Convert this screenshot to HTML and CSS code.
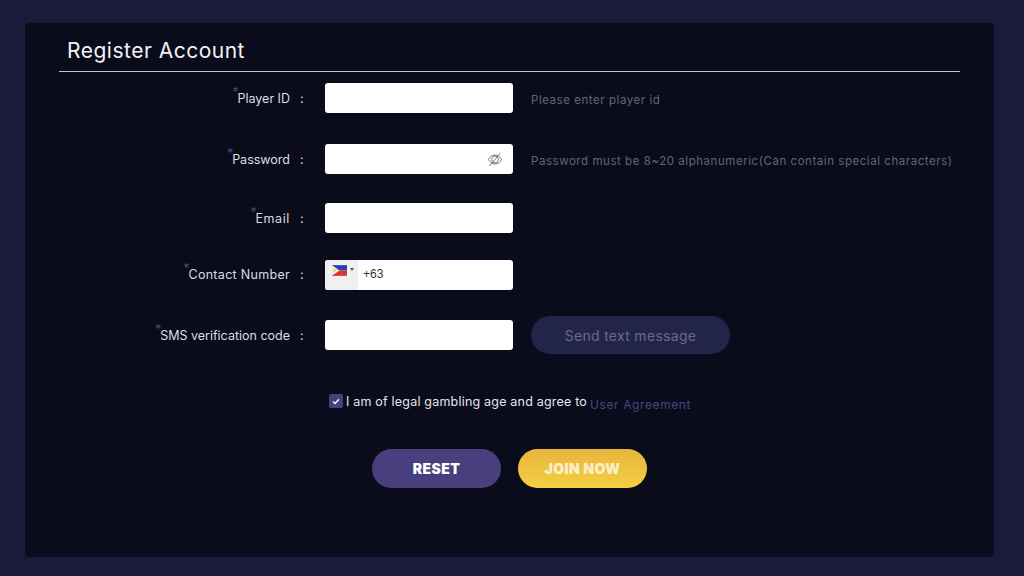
FILE: index.html
```html
<!DOCTYPE html>
<html lang="en">

<head>
  <meta charset="UTF-8">
  <meta name="viewport" content="width=device-width, initial-scale=1.0">
  <title>Register Account</title>
  <link rel="stylesheet" href="styles.css">
</head>

<body>
  <div class="panel">
    <h2 class="panel-title">Register Account</h2>

    <form class="register-form">
      <div class="form-row row-player">
        <label class="field-label"><span class="required">Player ID</span><span class="colon">:</span></label>
        <div class="field-input"></div>
        <span class="field-hint">Please enter player id</span>
      </div>

      <div class="form-row row-password">
        <label class="field-label"><span class="required">Password</span><span class="colon">:</span></label>
        <div class="field-input input-password">
          <svg class="eye-icon" width="16" height="15" viewBox="0 0 16 15" fill="none" stroke="#7b7c80" stroke-width="1">
            <path d="M1.500 7.500C3 4.500 5.200 3 8 3s5 1.500 6.500 4.500C13 10.500 10.800 12 8 12s-5-1.500-6.500-4.500z" />
            <circle cx="8" cy="7.500" r="3.400" />
            <path d="M13.500 1L2.500 14" />
          </svg>
        </div>
        <span class="field-hint">Password must be 8~20 alphanumeric(Can contain special characters)</span>
      </div>

      <div class="form-row row-email">
        <label class="field-label label-email"><span class="required">Email</span><span class="colon">:</span></label>
        <div class="field-input"></div>
      </div>

      <div class="form-row row-contact">
        <label class="field-label label-contact"><span class="required">Contact Number</span><span class="colon">:</span></label>
        <div class="field-input input-phone">
          <div class="flag-box">
            <svg class="flag" width="15" height="11" viewBox="0 0 14 10">
              <rect width="14" height="5" fill="#2a3fa8" />
              <rect y="5" width="14" height="5" fill="#dc3232" />
              <path d="M0 0L7 5L0 10z" fill="#f4efe0" />
              <circle cx="2.300" cy="5" r="1.100" fill="#f2c230" />
            </svg>
            <span class="flag-arrow"></span>
          </div>
          <span class="dial-code">+63</span>
        </div>
      </div>

      <div class="form-row row-sms">
        <label class="field-label"><span class="required">SMS verification code</span><span class="colon">:</span></label>
        <div class="field-input"></div>
        <button class="send-btn" type="button">Send text message</button>
      </div>

      <div class="agree-row">
        <span class="check-box">
          <svg width="8" height="7" viewBox="0 0 8 7" fill="none" stroke="#fff" stroke-width="1.300">
            <path d="M1 3.600L3 5.500L7 1.200" />
          </svg>
        </span>
        <span class="agree-text">I am of legal gambling age and agree to</span>
        <a class="agree-link">User Agreement</a>
      </div>

      <div class="button-row">
        <button class="pill-btn reset-btn" type="button">RESET</button>
        <button class="pill-btn join-btn" type="button">JOIN NOW</button>
      </div>
    </form>
  </div>
</body>

</html>
```

FILE: styles.css
```css
* {
  box-sizing: border-box;
}

body {
  margin: 0;
  height: 576px;
  overflow: hidden;
  background-color: #1a1b3b;
  font-family: 'Inter', 'Open Sans', arial, sans-serif;
  color: #e6e6ea;
}

.panel {
  margin: 0 30px 0 25px;
  position: relative;
  top: 23px;
  height: 534px;
  padding: 0 34px;
  background-color: #0a0c1c;
  border-radius: 4px;
}

.panel-title {
  margin: 0;
  height: 49px;
  padding: 15px 0 0 8px;
  font-size: 21px;
  line-height: 26px;
  font-weight: 400;
  letter-spacing: .5px;
  color: #f2f2f4;
  border-bottom: 1px solid #c4c4ca;
}

.register-form {
  display: flex;
  flex-direction: column;
}

.form-row {
  display: flex;
  align-items: center;
  height: 30px;
}

.row-player {
  margin-top: 11px;
}

.row-password {
  margin-top: 31px;
}

.row-email {
  margin-top: 29px;
}

.row-contact {
  margin-top: 27px;
}

.row-sms {
  margin-top: 30px;
}

.field-label {
  display: flex;
  justify-content: flex-end;
  width: 266px;
  padding-right: 21px;
  font-size: 12.500px;
  color: #dcdce2;
}

.label-email {
  letter-spacing: .6px;
}

.label-contact {
  margin-top: -2px;
  letter-spacing: .3px;
}

.required {
  position: relative;
}

.required:before {
  content: '*';
  position: absolute;
  left: -5px;
  top: -7px;
  font-size: 12px;
  color: #4a4580;
}

.colon {
  margin-left: 10px;
  width: 4px;
}

.field-input {
  width: 188px;
  height: 30px;
  background-color: #fff;
  border-radius: 3px;
}

.input-password {
  display: flex;
  align-items: center;
  justify-content: flex-end;
  padding-right: 10px;
}

.input-phone {
  display: flex;
  overflow: hidden;
}

.flag-box {
  display: flex;
  align-items: flex-start;
  gap: 3px;
  width: 33px;
  padding: 5px 0 0 7px;
  background-color: #f0f0f0;
}

.flag-arrow {
  margin-top: 3px;
  border-left: 2.500px solid transparent;
  border-right: 2.500px solid transparent;
  border-top: 3px solid #555;
}

.dial-code {
  padding-left: 5px;
  font-family: 'Liberation Sans', arial, sans-serif;
  font-size: 12px;
  line-height: 28px;
  color: #333;
}

.field-hint {
  margin: 4px 0 0 18px;
  font-size: 11.500px;
  letter-spacing: .55px;
  color: #63647a;
}

.send-btn {
  margin-left: 18px;
  width: 199px;
  height: 38px;
  border: none;
  border-radius: 19px;
  background-color: #23244a;
  color: #6a6a85;
  font-family: inherit;
  font-size: 14px;
  letter-spacing: .3px;
}

.agree-row {
  display: flex;
  align-items: center;
  margin: 44px 0 0 270px;
  height: 14px;
}

.check-box {
  display: flex;
  align-items: center;
  justify-content: center;
  width: 14px;
  height: 14px;
  background-color: #4a3f7e;
  border-radius: 2px;
}

.agree-text {
  margin-left: 3px;
  font-size: 12.500px;
  letter-spacing: .2px;
  color: #e6e6ea;
}

.agree-link {
  margin: 6px 0 0 3px;
  font-size: 12px;
  letter-spacing: .6px;
  color: #4a4580;
}

.button-row {
  display: flex;
  gap: 17px;
  margin: 41px 0 0 313px;
}

.pill-btn {
  width: 129px;
  height: 39px;
  border: none;
  border-radius: 20px;
  color: #fff;
  font-family: inherit;
  font-size: 14px;
  font-weight: 900;
  letter-spacing: .4px;
}

.reset-btn {
  background-color: #4a3f7e;
}

.join-btn {
  background: linear-gradient(#e8b53c, #f4cf42);
  color: #fbeecb;
}
```
